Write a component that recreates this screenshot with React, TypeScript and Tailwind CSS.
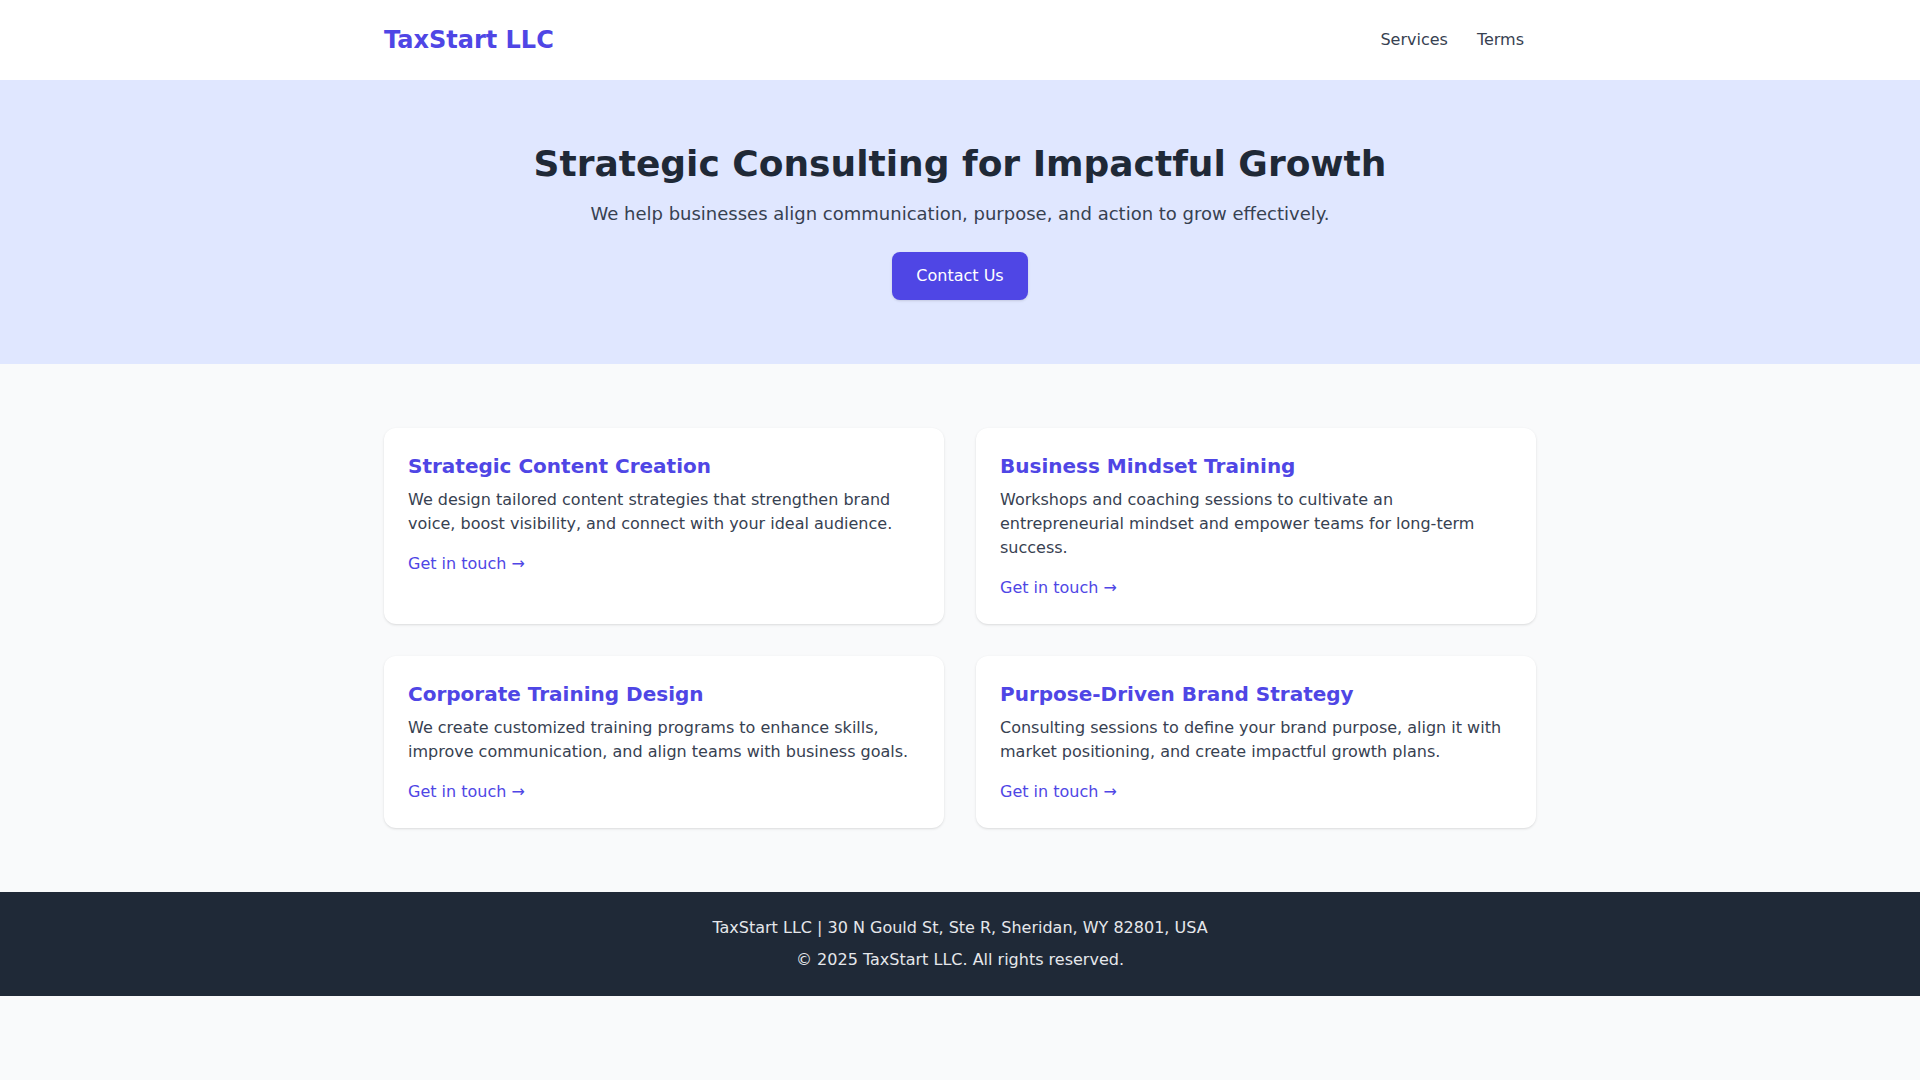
export default function App() {
  const services = [
    {
      title: "Strategic Content Creation",
      text: "We design tailored content strategies that strengthen brand voice, boost visibility, and connect with your ideal audience.",
    },
    {
      title: "Business Mindset Training",
      text: "Workshops and coaching sessions to cultivate an entrepreneurial mindset and empower teams for long-term success.",
    },
    {
      title: "Corporate Training Design",
      text: "We create customized training programs to enhance skills, improve communication, and align teams with business goals.",
    },
    {
      title: "Purpose-Driven Brand Strategy",
      text: "Consulting sessions to define your brand purpose, align it with market positioning, and create impactful growth plans.",
    },
  ];

  return (
    <div className="min-h-screen bg-[#f9fafb] font-['DejaVu_Sans',sans-serif]">
      {/* Header */}
      <header className="bg-white h-20">
        <div className="max-w-6xl mx-auto h-full flex items-center justify-between">
          <div className="text-2xl font-bold text-[#4f46e5]">TaxStart LLC</div>
          <nav className="flex gap-[29px] pr-3 text-[#374151]">
            <a href="#">Services</a>
            <a href="#">Terms</a>
          </nav>
        </div>
      </header>

      {/* Hero */}
      <section className="bg-[#e0e7ff] py-16 text-center">
        <h1 className="text-4xl font-bold text-[#1f2937] mb-4">Strategic Consulting for Impactful Growth</h1>
        <p className="text-lg text-[#374151] mb-6">
          We help businesses align communication, purpose, and action to grow effectively.
        </p>
        <a href="#" className="inline-block bg-[#4f46e5] text-white px-6 py-3 rounded-lg shadow">
          Contact Us
        </a>
      </section>

      {/* Services */}
      <section className="py-16">
        <div className="max-w-6xl mx-auto grid grid-cols-2 gap-8">
          {services.map((s) => (
            <div key={s.title} className="bg-white rounded-xl shadow p-6">
              <h3 className="text-xl font-bold text-[#4f46e5] mb-2">{s.title}</h3>
              <p className="text-[#374151]">{s.text}</p>
              <a href="#" className="inline-block mt-4 text-[#4f46e5]">
                Get in touch →
              </a>
            </div>
          ))}
        </div>
      </section>

      {/* Footer */}
      <footer className="bg-[#1f2937] text-[#e5e7eb] text-center py-6">
        <p>TaxStart LLC | 30 N Gould St, Ste R, Sheridan, WY 82801, USA</p>
        <p className="mt-2">© 2025 TaxStart LLC. All rights reserved.</p>
      </footer>
    </div>
  );
}
